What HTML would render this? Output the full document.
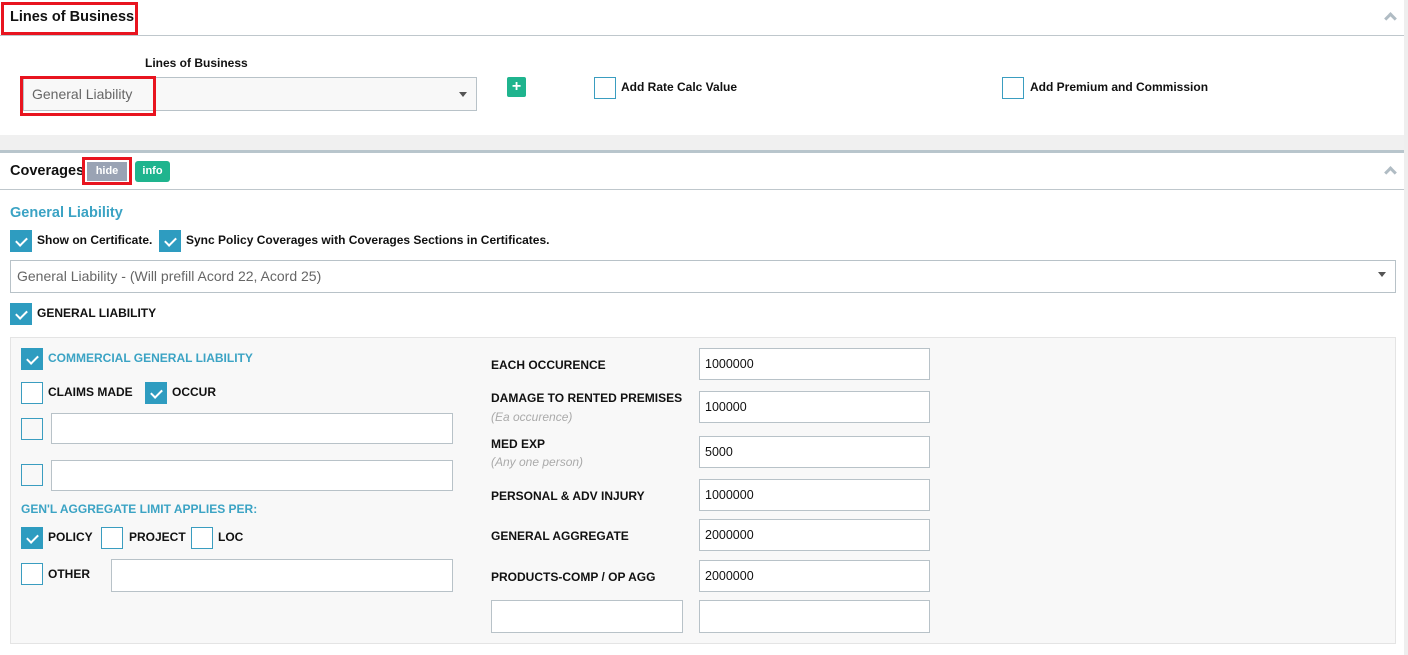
<!DOCTYPE html>
<html><head><meta charset="utf-8"><style>
*{box-sizing:border-box;margin:0;padding:0}
body{width:1408px;height:655px;background:#fff;font-family:"Liberation Sans",sans-serif;font-size:12px;color:#111;position:relative;overflow:hidden}
.a{position:absolute}
.b{font-weight:bold}
.cb{position:absolute;width:22px;height:22px;border:1px solid #3a9dc0;background:#fff}
.cb.on{background:#2e9cc0;border-color:#2e9cc0}
.cb.on::after{content:"";position:absolute;left:7px;top:4px;width:5px;height:9px;border:solid #fff;border-width:0 2px 2px 0;transform:rotate(45deg)}
.in{position:absolute;border:1px solid #b8c2c8;background:#fff;height:32px;padding-left:5px;line-height:30px;font-size:12.5px}
.red{position:absolute;border:3px solid #e8141f}
.chev{position:absolute;width:9px;height:9px;border:solid #b0bcc4;border-width:3px 0 0 3px;transform:rotate(45deg)}
</style></head><body>
<div class="a" style="left:1404px;top:0;width:4px;height:655px;background:#eee"></div>
<!-- section 1 -->
<div class="a b" style="left:10px;top:9px;font-size:14.5px">Lines of Business</div>
<div class="red" style="left:1px;top:2px;width:137px;height:33px"></div>
<div class="chev" style="left:1386px;top:14px"></div>
<div class="a" style="left:0;top:35px;width:1404px;height:1px;background:#bfc7cc"></div>
<div class="a b" style="left:145px;top:56px">Lines of Business</div>
<div class="in" style="left:23px;top:77px;width:454px;height:34px;background:#f8f8f8;color:#666;font-size:14px;line-height:33px;padding-left:8px">General Liability</div>
<div class="a" style="left:459px;top:92px;border:4px solid transparent;border-top:5px solid #555"></div>
<div class="red" style="left:20px;top:76px;width:136px;height:40px"></div>
<div class="a" style="left:507px;top:77px;width:19px;height:20px;background:#1fb48e;border-radius:2px;color:#fff;font-weight:bold;font-size:16px;line-height:19px;text-align:center">+</div>
<div class="cb" style="left:594px;top:77px"></div>
<div class="a b" style="left:621px;top:80px">Add Rate Calc Value</div>
<div class="cb" style="left:1002px;top:77px"></div>
<div class="a b" style="left:1030px;top:80px">Add Premium and Commission</div>
<div class="a" style="left:0;top:135px;width:1404px;height:15px;background:#f0f0f0"></div>
<div class="a" style="left:0;top:150px;width:1404px;height:3px;background:#b8c5cc"></div>
<!-- section 2 -->
<div class="a b" style="left:10px;top:163px;font-size:14.5px">Coverages</div>
<div class="a" style="left:87px;top:162px;width:40px;height:19px;background:#9aa3b4;color:#fff;font-weight:bold;font-size:11px;line-height:19px;text-align:center">hide</div>
<div class="red" style="left:82px;top:157px;width:50px;height:28px"></div>
<div class="a" style="left:135px;top:161px;width:35px;height:21px;background:#1fb48e;border-radius:3px;color:#fff;font-weight:bold;font-size:11px;line-height:21px;text-align:center">info</div>
<div class="chev" style="left:1386px;top:168px"></div>
<div class="a" style="left:0;top:189px;width:1404px;height:1px;background:#bfc7cc"></div>
<div class="a b" style="left:10px;top:205px;font-size:14.5px;color:#3ba3c4">General Liability</div>
<div class="cb on" style="left:10px;top:230px"></div>
<div class="a b" style="left:37px;top:233px">Show on Certificate.</div>
<div class="cb on" style="left:159px;top:230px"></div>
<div class="a b" style="left:186px;top:233px">Sync Policy Coverages with Coverages Sections in Certificates.</div>
<div class="in" style="left:10px;top:260px;width:1386px;height:33px;color:#666;font-size:14px;padding-left:6px">General Liability - (Will prefill Acord 22, Acord 25)</div>
<div class="a" style="left:1378px;top:272px;border:4px solid transparent;border-top:5px solid #555"></div>
<div class="cb on" style="left:10px;top:303px"></div>
<div class="a b" style="left:37px;top:306px">GENERAL LIABILITY</div>
<div class="a" style="left:10px;top:337px;width:1386px;height:307px;background:#f8f8f8;border:1px solid #e4e4e4"></div>
<div class="cb on" style="left:21px;top:348px"></div>
<div class="a b" style="left:48px;top:351px;color:#3ba3c4">COMMERCIAL GENERAL LIABILITY</div>
<div class="cb" style="left:21px;top:382px"></div>
<div class="a b" style="left:48px;top:385px">CLAIMS MADE</div>
<div class="cb on" style="left:145px;top:382px"></div>
<div class="a b" style="left:172px;top:385px">OCCUR</div>
<div class="cb" style="left:21px;top:418px;background:#f8f8f8"></div>
<div class="in" style="left:51px;top:413px;width:402px;height:31px"></div>
<div class="cb" style="left:21px;top:464px;background:#f8f8f8"></div>
<div class="in" style="left:51px;top:460px;width:402px;height:31px"></div>
<div class="a b" style="left:21px;top:502px;color:#3ba3c4">GEN'L AGGREGATE LIMIT APPLIES PER:</div>
<div class="cb on" style="left:21px;top:527px"></div>
<div class="a b" style="left:48px;top:530px">POLICY</div>
<div class="cb" style="left:101px;top:527px"></div>
<div class="a b" style="left:129px;top:530px">PROJECT</div>
<div class="cb" style="left:191px;top:527px"></div>
<div class="a b" style="left:218px;top:530px">LOC</div>
<div class="cb" style="left:21px;top:563px"></div>
<div class="a b" style="left:48px;top:567px">OTHER</div>
<div class="in" style="left:111px;top:559px;width:342px;height:33px"></div>

<div class="a b" style="left:491px;top:358px">EACH OCCURENCE</div>
<div class="in" style="left:699px;top:348px;width:231px">1000000</div>
<div class="a b" style="left:491px;top:391px">DAMAGE TO RENTED PREMISES</div>
<div class="a" style="left:491px;top:410px;color:#aaa;font-style:italic">(Ea occurence)</div>
<div class="in" style="left:699px;top:391px;width:231px">100000</div>
<div class="a b" style="left:491px;top:437px">MED EXP</div>
<div class="a" style="left:491px;top:455px;color:#aaa;font-style:italic">(Any one person)</div>
<div class="in" style="left:699px;top:436px;width:231px">5000</div>
<div class="a b" style="left:491px;top:489px">PERSONAL &amp; ADV INJURY</div>
<div class="in" style="left:699px;top:479px;width:231px">1000000</div>
<div class="a b" style="left:491px;top:529px">GENERAL AGGREGATE</div>
<div class="in" style="left:699px;top:519px;width:231px">2000000</div>
<div class="a b" style="left:491px;top:570px">PRODUCTS-COMP / OP AGG</div>
<div class="in" style="left:699px;top:560px;width:231px">2000000</div>
<div class="in" style="left:491px;top:600px;width:192px;height:33px"></div>
<div class="in" style="left:699px;top:600px;width:231px;height:33px"></div>
</body></html>
